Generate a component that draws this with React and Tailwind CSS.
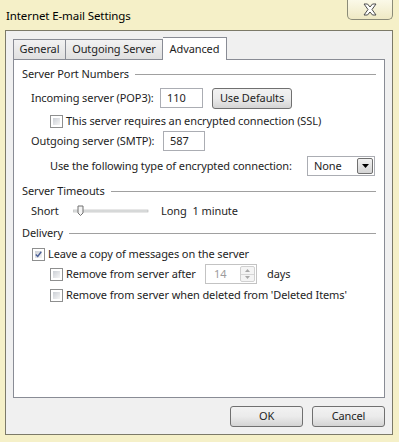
import React from 'react';

const font = { fontFamily: '"Noto Sans", "Liberation Sans", sans-serif' };

const CheckBox = ({ checked }) => (
  <div className="w-[13px] h-[13px] border border-[#8e8f8f] bg-white p-[2px] shrink-0">
    <div className="w-full h-full bg-linear-to-br from-[#cbcfd5] to-[#f6f6f6] flex items-center justify-center">
      {checked && (
        <svg width="9" height="9" viewBox="0 0 9 9">
          <path d="M1 4.5 L3.5 7 L8 1" fill="none" stroke="#4a5f97" strokeWidth="1.8" />
        </svg>
      )}
    </div>
  </div>
);

const Section = ({ title }) => (
  <div className="h-[16px] flex items-center pl-[8px] pr-[8px]">
    <span className="text-[#1e1e1e] mr-[6px]">{title}</span>
    <div className="flex-1 h-px bg-[#a0a0a0]" />
  </div>
);

const WinButton = ({ children, className = '' }) => (
  <div className={`h-[21px] border border-[#707070] rounded-[3px] bg-linear-to-b from-[#f2f2f2] via-[#ebebeb] to-[#d4d4d4] flex items-center justify-center text-[#1e1e1e] ${className}`}>
    {children}
  </div>
);

const TextBox = ({ value, className = '' }) => (
  <div className={`h-[20px] border border-[#abadb3] bg-white flex items-center pl-[6px] ${className}`}>
    {value}
  </div>
);

export default function App() {
  return (
    <div className="w-[399px] h-[442px] bg-[#f5f0c8] overflow-hidden text-[11px] tracking-[-0.1px] whitespace-nowrap text-[#1e1e1e]" style={font}>
      {/* Title bar */}
      <div className="h-[30px] flex justify-between">
        <div className="pl-[6px] pt-[7px] text-[11.5px] text-black">Internet E-mail Settings</div>
        <div className="mr-[6px] w-[46px] h-[20px] border border-t-0 border-[#8b8b78] rounded-b-[5px] bg-linear-to-b from-[#fbf9e8] to-[#efe9c4] flex items-center justify-center">
          <svg width="16" height="13" viewBox="0 0 16 13">
            <path d="M2 1 H5.5 L8 4 L10.5 1 H14 L10 6.5 L14 12 H10.5 L8 9 L5.5 12 H2 L6 6.5 Z" fill="#ffffff" stroke="#4c4c4c" strokeWidth="1" strokeLinejoin="round" />
          </svg>
        </div>
      </div>

      {/* Client area */}
      <div className="ml-[5px] w-[388px] h-[405px] border border-[#7c7a68] bg-[#f0f0f0] pl-[7px] pt-[5px]">
        {/* Tabs */}
        <div className="h-[23px] flex items-end">
          <div className="w-[53px] h-[20px] border border-b-0 border-[#898c95] bg-linear-to-b from-[#f2f2f2] to-[#e0e0e0] flex items-center justify-center">General</div>
          <div className="w-[97px] h-[20px] border border-b-0 border-l-0 border-[#898c95] bg-linear-to-b from-[#f2f2f2] to-[#e0e0e0] flex items-center justify-center">Outgoing Server</div>
          <div className="w-[64px] h-[23px] border border-b-0 border-l-0 border-[#898c95] bg-white flex items-center justify-center -mb-px relative z-10">Advanced</div>
        </div>

        {/* Panel */}
        <div className="w-[372px] h-[339px] border border-[#898c95] bg-white pt-[6px]">
          <Section title="Server Port Numbers" />

          <div className="h-[20px] mt-[6px] flex items-center pl-[17px]">
            <span className="w-[129px]">Incoming server (POP3):</span>
            <TextBox value="110" className="w-[43px]" />
            <WinButton className="ml-[9px] w-[80px]">Use Defaults</WinButton>
          </div>

          <div className="h-[16px] mt-[5px] flex items-center pl-[36px]">
            <CheckBox />
            <span className="ml-[3px]">This server requires an encrypted connection (SSL)</span>
          </div>

          <div className="h-[20px] mt-[2px] flex items-center pl-[17px]">
            <span className="w-[132px]">Outgoing server (SMTP):</span>
            <TextBox value="587" className="w-[42px]" />
          </div>

          <div className="h-[20px] mt-[5px] flex items-center pl-[36px]">
            <span className="w-[257px]">Use the following type of encrypted connection:</span>
            <div className="w-[68px] h-[20px] border border-[#abadb3] bg-white flex items-center justify-between pl-[6px] pr-px">
              <span>None</span>
              <div className="w-[16px] h-[16px] border border-[#707070] rounded-[2px] bg-linear-to-b from-[#f2f2f2] to-[#d4d4d4] flex items-center justify-center">
                <svg width="7" height="4" viewBox="0 0 7 4"><path d="M0 0 H7 L3.5 4 Z" fill="#000" /></svg>
              </div>
            </div>
          </div>

          <div className="mt-[7px]"><Section title="Server Timeouts" /></div>

          <div className="h-[16px] mt-[4px] flex items-center pl-[17px]">
            <span className="w-[42px]">Short</span>
            <svg width="76" height="14" viewBox="0 0 76 14">
              <rect x="0" y="6" width="75" height="2" fill="#e7eaea" stroke="#b0b0b0" strokeWidth="0.6" />
              <path d="M5 2 H10 V9 L7.5 11.5 L5 9 Z" fill="#f4f4f4" stroke="#707070" strokeWidth="1" />
            </svg>
            <span className="ml-[12px]">Long</span>
            <span className="ml-[6px]">1 minute</span>
          </div>

          <div className="mt-[6px]"><Section title="Delivery" /></div>

          <div className="h-[16px] mt-[5px] flex items-center pl-[18px]">
            <CheckBox checked />
            <span className="ml-[3px]">Leave a copy of messages on the server</span>
          </div>

          <div className="h-[20px] mt-[2px] flex items-center pl-[36px]">
            <CheckBox />
            <span className="ml-[3px] w-[139px]">Remove from server after</span>
            <div className="w-[52px] h-[20px] border border-[#c3c3c3] bg-white flex items-center justify-between pl-[8px] pr-px text-[#9c9c9c]">
              <span>14</span>
              <div className="w-[15px] h-[16px] flex flex-col border border-[#d0d0d0] rounded-[2px] bg-[#f4f4f4]">
                <div className="flex-1 flex items-center justify-center border-b border-[#d6d6d6]">
                  <svg width="5" height="3" viewBox="0 0 5 3"><path d="M0 3 L2.5 0 L5 3 Z" fill="#a8a8a8" /></svg>
                </div>
                <div className="flex-1 flex items-center justify-center">
                  <svg width="5" height="3" viewBox="0 0 5 3"><path d="M0 0 H5 L2.5 3 Z" fill="#a8a8a8" /></svg>
                </div>
              </div>
            </div>
            <span className="ml-[10px]">days</span>
          </div>

          <div className="h-[16px] mt-[3px] flex items-center pl-[36px]">
            <CheckBox />
            <span className="ml-[3px]">Remove from server when deleted from 'Deleted Items'</span>
          </div>
        </div>

        {/* Buttons */}
        <div className="flex justify-end gap-[9px] mt-[8px] w-[372px]">
          <WinButton className="w-[73px]">OK</WinButton>
          <WinButton className="w-[73px]">Cancel</WinButton>
        </div>
      </div>
    </div>
  );
}
